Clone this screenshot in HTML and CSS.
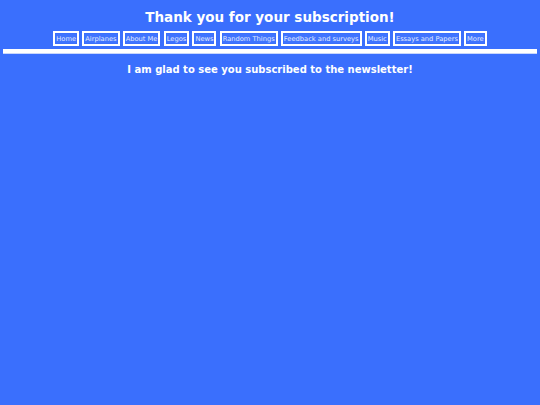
FILE: index.html
```html
<!DOCTYPE html>
<html>
<head>
<meta charset="utf-8">
<link rel="stylesheet" href="styles.css">
</head>
<body>
<h1 class="title">Thank you for your subscription!</h1>
<nav class="nav">
  <a class="btn">Home</a>
  <a class="btn">Airplanes</a>
  <a class="btn">About Me</a>
  <a class="btn">Legos</a>
  <a class="btn">News</a>
  <a class="btn">Random Things</a>
  <a class="btn">Feedback and surveys</a>
  <a class="btn">Music</a>
  <a class="btn">Essays and Papers</a>
  <a class="btn">More</a>
</nav>
<div class="rule"></div>
<h2 class="msg">I am glad to see you subscribed to the newsletter!</h2>
</body>
</html>
```
FILE: styles.css
```css
html, body {
  margin: 0;
  padding: 0;
  background: #3a6ffd;
  font-family: "DejaVu Sans", Verdana, sans-serif;
  color: #ffffff;
}
body {
  padding: 0 3px;
}
.title {
  margin: 0;
  padding-top: 8px;
  font-size: 13.5px;
  line-height: 18px;
  text-align: center;
  font-weight: bold;
}
.nav {
  margin-top: 5px;
  display: flex;
  justify-content: center;
  gap: 3.2px;
}
.btn {
  display: flex;
  align-items: center;
  height: 10px;
  border: 2px solid #ffffff;
  padding: 0.5px 1px;
  font-size: 6.7px;
  line-height: 10px;
  color: #e2eaff;
  background: #3f74ff;
  box-shadow: inset 0 0 0 1px #3a6ffd;
}
.rule {
  height: 4px;
  background: #ffffff;
  margin-top: 2.5px;
  border-bottom: 1px solid #c9d6fb;
}
.msg {
  margin: 9px 0 0;
  font-size: 10px;
  line-height: 13px;
  text-align: center;
  font-weight: bold;
}
```
